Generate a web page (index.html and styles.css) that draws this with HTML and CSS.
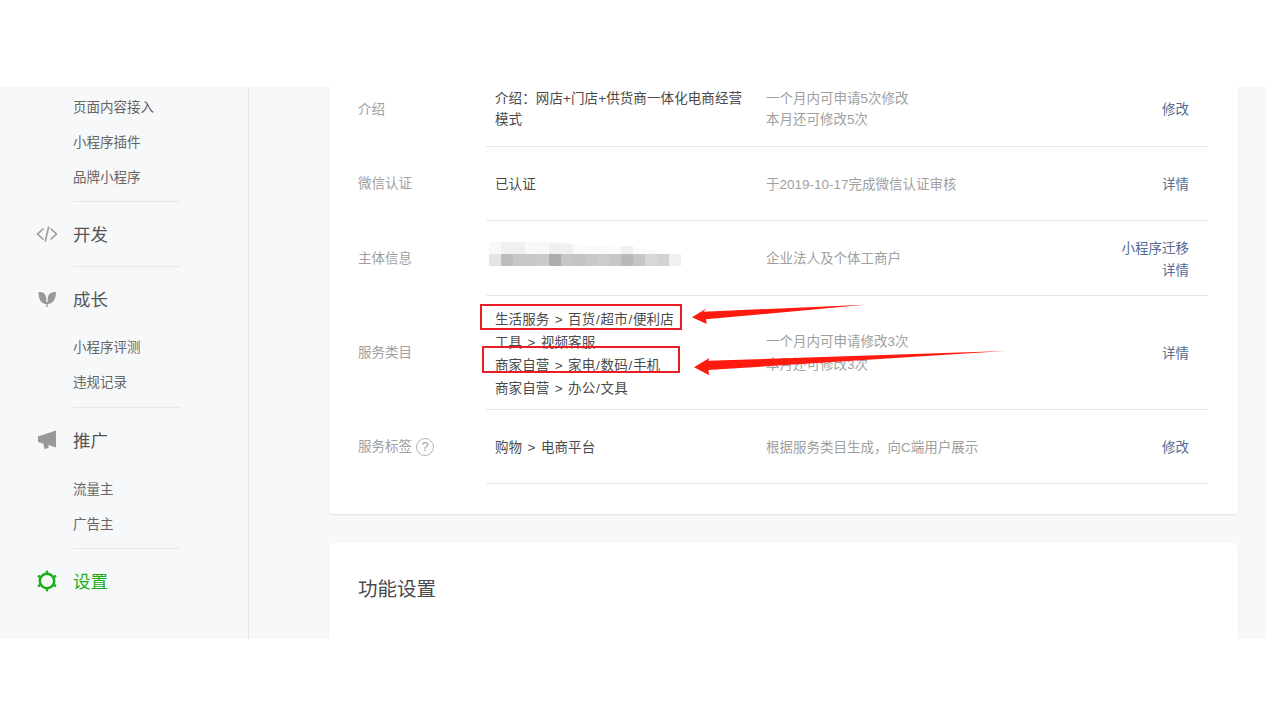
FILE: index.html
```html
<!DOCTYPE html>
<html lang="zh-CN">
<head>
  <meta charset="UTF-8">
  <meta name="viewport" content="width=device-width, initial-scale=1.0">
  <title>设置</title>
  <link rel="stylesheet" href="styles.css">
</head>
<body>
  <div class="frame">
    <aside class="sidebar">
      <ul class="sub-list first">
        <li>页面内容接入</li>
        <li>小程序插件</li>
        <li>品牌小程序</li>
      </ul>
      <div class="divider"></div>

      <div class="nav-head">
        <svg class="nav-icon" viewBox="0 0 22 22" fill="none" stroke="#999" stroke-width="1.6"><path d="M7.500 5.500 1.500 11l6 5.500M14.500 5.500l6 5.500-6 5.500M12.800 3.500 9.200 18.500"/></svg>
        <span>开发</span>
      </div>
      <div class="divider"></div>

      <div class="nav-head">
        <svg class="nav-icon" viewBox="0 0 22 22" fill="#999"><path d="M2.500 4c4.500-.5 7.800 2 7.800 7v5C5 16 2.500 11 2.500 4zM20 4c-4.500-.5-8.300 2-8.300 7v5c5.300 0 8.300-5 8.300-12zM10.300 14h1.400v5h-1.400z"/></svg>
        <span>成长</span>
      </div>
      <ul class="sub-list">
        <li>小程序评测</li>
        <li>违规记录</li>
      </ul>
      <div class="divider"></div>

      <div class="nav-head">
        <svg class="nav-icon" viewBox="0 0 22 22" fill="#999"><path d="M20 1.500v17l-8-2.600.8 3.100-4.300 1-1.300-5.400L2 13V7.500z"/></svg>
        <span>推广</span>
      </div>
      <ul class="sub-list promo">
        <li>流量主</li>
        <li>广告主</li>
      </ul>
      <div class="divider"></div>

      <div class="nav-head active">
        <svg class="nav-icon" viewBox="0 0 22 22" fill="#1aad19">
          <circle cx="11" cy="11" r="7.200" fill="none" stroke="#1aad19" stroke-width="2.500"/>
          <circle cx="11" cy="1.700" r="1.300"/>
          <circle cx="11" cy="20.300" r="1.300"/>
          <circle cx="2.950" cy="6.350" r="1.300"/>
          <circle cx="19.050" cy="6.350" r="1.300"/>
          <circle cx="2.950" cy="15.650" r="1.300"/>
          <circle cx="19.050" cy="15.650" r="1.300"/>
        </svg>
        <span>设置</span>
      </div>
    </aside>

    <main class="content">
      <section class="card info-card">
        <div class="row">
          <div class="label">介绍</div>
          <div class="row-body">
            <div class="value">介绍：网店+门店+供货商一体化电商经营<br>模式</div>
            <div class="tip">一个月内可申请5次修改<br>本月还可修改5次</div>
            <div class="action"><a>修改</a></div>
          </div>
        </div>
        <div class="row">
          <div class="label">微信认证</div>
          <div class="row-body">
            <div class="value">已认证</div>
            <div class="tip">于2019-10-17完成微信认证审核</div>
            <div class="action"><a>详情</a></div>
          </div>
        </div>
        <div class="row">
          <div class="label">主体信息</div>
          <div class="row-body">
            <div class="value">
              <svg class="mosaic" width="192" height="24" viewBox="0 0 192 24">
                <path fill="#f8f8f8" d="M0 0h12v12H0zM36 0h36l12 2v10H36z"/>
                <path fill="#f0f0f0" d="M12 0h24v12H12zM60 1l24 2v9H60zM132 4h12v8h-12z"/>
                <path fill="#fafafa" d="M84 3l48 2v7H84zM144 6l24 2v4h-24z"/>
                <rect y="12" width="12" height="12" fill="#e4e4e4"/>
                <rect x="12" y="12" width="12" height="12" fill="#bdbdbd"/>
                <rect x="24" y="12" width="24" height="12" fill="#c8c8c8"/>
                <rect x="48" y="12" width="12" height="12" fill="#cbcbcb"/>
                <rect x="60" y="12" width="12" height="12" fill="#adadad"/>
                <rect x="72" y="12" width="12" height="12" fill="#c6c6c6"/>
                <rect x="84" y="12" width="12" height="12" fill="#c3c3c3"/>
                <rect x="96" y="12" width="12" height="12" fill="#c8c8c8"/>
                <rect x="108" y="12" width="12" height="12" fill="#cdcdcd"/>
                <rect x="120" y="12" width="12" height="12" fill="#c6c6c6"/>
                <rect x="132" y="12" width="12" height="12" fill="#b9b9b9"/>
                <rect x="144" y="12" width="12" height="12" fill="#c6c6c6"/>
                <rect x="156" y="12" width="12" height="12" fill="#d8d8d8"/>
                <rect x="168" y="12" width="12" height="12" fill="#d2d2d2"/>
                <rect x="180" y="12" width="12" height="12" fill="#f0f0f0"/>
              </svg>
            </div>
            <div class="tip">企业法人及个体工商户</div>
            <div class="action"><a>小程序迁移</a><a>详情</a></div>
          </div>
        </div>
        <div class="row">
          <div class="label">服务类目</div>
          <div class="row-body tall">
            <div class="value">
              <div>生活服务 &gt; 百货<span class="slash">/</span>超市<span class="slash">/</span>便利店</div>
              <div>工具 &gt; 视频客服</div>
              <div>商家自营 &gt; 家电<span class="slash">/</span>数码<span class="slash">/</span>手机</div>
              <div>商家自营 &gt; 办公<span class="slash">/</span>文具</div>
            </div>
            <div class="tip">一个月内可申请修改3次<br>本月还可修改3次</div>
            <div class="action"><a>详情</a></div>
          </div>
        </div>
        <div class="row">
          <div class="label">服务标签 <span class="help">?</span></div>
          <div class="row-body">
            <div class="value">购物 &gt; 电商平台</div>
            <div class="tip">根据服务类目生成，向C端用户展示</div>
            <div class="action"><a>修改</a></div>
          </div>
        </div>
      </section>

      <section class="card setting-card">
        <h2>功能设置</h2>
      </section>
    </main>
  </div>

  <!-- 截图上的标注 -->
  <div class="mark mark-one"></div>
  <div class="mark mark-two"></div>
  <svg class="arrows" width="1266" height="727" viewBox="0 0 1266 727">
    <path fill="#ff1a10" d="M692 317.300 706.700 308.300 703.300 311.700 865.300 304.700 706 319.300 706.700 324z"/>
    <path fill="#ff1a10" d="M694 367.300 709.300 358 708.300 360.700 1005 351 708.300 370 709.300 375.300z"/>
  </svg>
</body>
</html>
```

FILE: styles.css
```css
* {
  box-sizing: border-box;
}
html, body {
  height: 727px;
  overflow: hidden;
}
body {
  position: relative;
  margin: 0;
  padding-top: 87px;
  background-color: #fff;
  font-family: "Liberation Sans", "Noto Sans CJK SC", sans-serif;
  font-size: 13.5px;
  color: #4a4a4a;
}
.frame {
  display: flex;
  height: 552px;
  overflow: hidden;
  background-color: #f7f8fa;
}

/* 左侧菜单 */
.sidebar {
  flex: none;
  width: 249px;
  border-right: 1px solid #e7e7eb;
}
.sub-list {
  margin: 0;
  padding: 0 0 7px 73px;
  list-style: none;
  color: #666;
}
.sub-list.first {
  padding-top: 3px;
  padding-bottom: 6px;
}
.sub-list.promo {
  padding-top: 1px;
  padding-bottom: 6px;
}
.sub-list li {
  height: 35px;
  line-height: 35px;
}
.divider {
  width: 107px;
  height: 1px;
  margin-left: 73px;
  background-color: #e7e7eb;
}
.nav-head {
  display: flex;
  align-items: center;
  height: 60px;
  margin-top: 3px;
  padding: 0 0 3px 36px;
  font-size: 17.5px;
  color: #555;
}
.nav-head + .divider {
  margin-top: 1px;
}
.nav-icon {
  width: 22px;
  height: 22px;
  margin-right: 15px;
}
.nav-head.active {
  color: #1aad19;
}

/* 右侧内容 */
.content {
  flex: 1;
  padding: 0 28px 0 80px;
}
.card {
  padding: 0 30px 30px 29px;
  background-color: #fff;
  border-radius: 4px;
  box-shadow: 0 1px 2px rgba(0, 0, 0, 0.1);
}
.info-card {
  margin-top: -15px;
  margin-bottom: 29px;
}
.setting-card {
  min-height: 200px;
}
.card h2 {
  margin: 0;
  padding-top: 34px;
  font-size: 19.5px;
  font-weight: 400;
  line-height: 24px;
}
.row {
  display: flex;
}
.label {
  flex: none;
  display: flex;
  align-items: center;
  gap: 4px;
  width: 128px;
  line-height: 21px;
  color: #a0a0a0;
}
.help {
  display: inline-block;
  width: 18px;
  height: 18px;
  border: 1px solid #b5b5b5;
  border-radius: 50%;
  font-size: 13px;
  line-height: 16px;
  text-align: center;
}
.row-body {
  flex: 1;
  display: flex;
  align-items: center;
  min-height: 74.5px;
  padding-top: 2px;
  line-height: 21px;
  border-bottom: 1px solid #e7e7eb;
}
.row:first-child .row-body {
  padding-top: 0;
}
.row-body.tall {
  padding: 10.5px 0 8.5px;
  line-height: 23px;
}
.value {
  flex: none;
  width: 280px;
  padding-left: 9px;
  word-spacing: 1.5px;
  letter-spacing: 0.1px;
}
.tall .value {
  padding-top: 2px;
}
.slash {
  margin: 0 0.7px;
}
.mosaic {
  display: block;
  margin: -10px 0 0 -6px;
}
.tip {
  flex: 1;
  color: #a0a0a0;
}
.action {
  flex: none;
  padding: 2px 19px 0 0;
  text-align: right;
  line-height: 22px;
}
.action a {
  display: block;
  color: #576b95;
}

/* 标注 */
.mark {
  position: absolute;
  border: 2px solid #ea1c24;
}
.mark-one {
  left: 480px;
  top: 304px;
  width: 202px;
  height: 26px;
}
.mark-two {
  left: 482px;
  top: 346px;
  width: 198px;
  height: 27px;
}
.arrows {
  position: absolute;
  left: 0;
  top: 0;
}
```
